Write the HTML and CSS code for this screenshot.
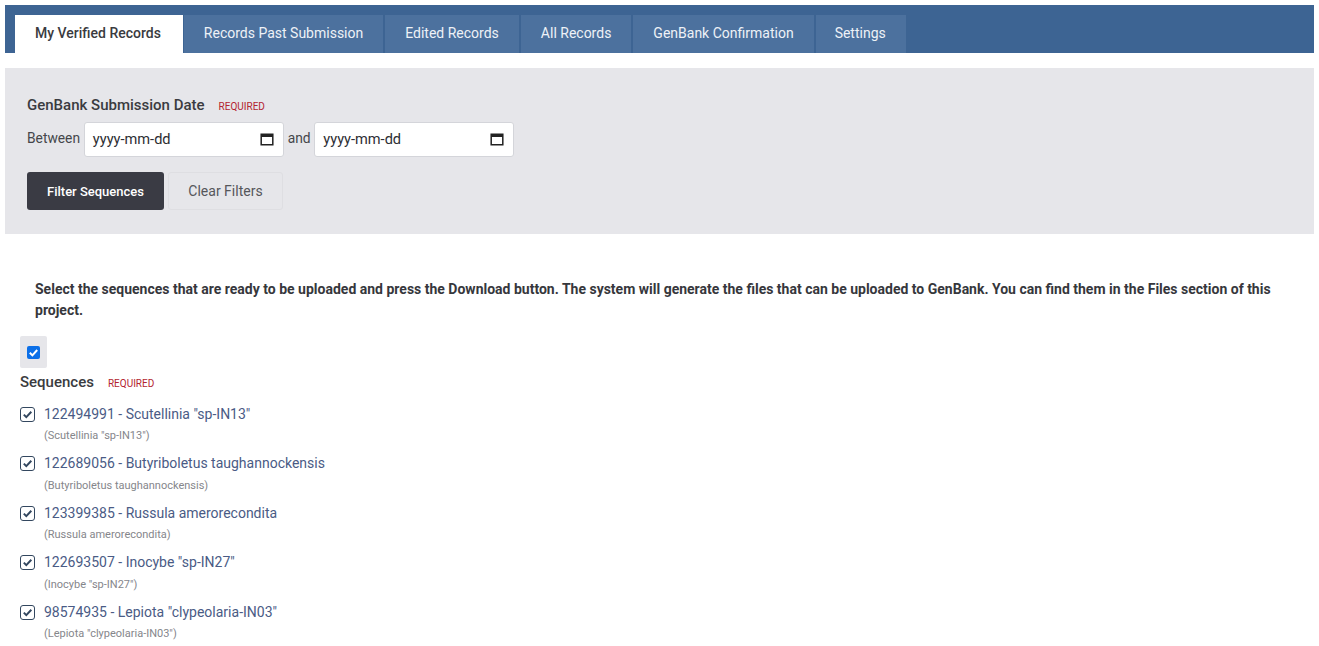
FILE: index.html
```html
<!DOCTYPE html>
<html lang="en">
<head>
<meta charset="utf-8">
<title>GenBank Submission</title>
<link rel="stylesheet" href="styles.css">
</head>
<body>
<nav class="tabs">
  <a class="tab active">My Verified Records</a>
  <a class="tab">Records Past Submission</a>
  <a class="tab">Edited Records</a>
  <a class="tab">All Records</a>
  <a class="tab">GenBank Confirmation</a>
  <a class="tab">Settings</a>
</nav>
<section class="filter">
  <div class="label-row"><span class="label">GenBank Submission Date</span><span class="req">REQUIRED</span></div>
  <div class="date-row">
    <span class="date-text">Between</span>
    <div class="date"><span>yyyy-mm-dd</span><svg width="14" height="14" viewBox="0 0 14 14"><path d="M1.2 2.2h11.6v10.6H1.200z" fill="none" stroke="#222" stroke-width="1.500"/><path d="M1 2h12v3H1z" fill="#222"/></svg></div>
    <span class="date-text">and</span>
    <div class="date"><span>yyyy-mm-dd</span><svg width="14" height="14" viewBox="0 0 14 14"><path d="M1.2 2.2h11.6v10.6H1.200z" fill="none" stroke="#222" stroke-width="1.500"/><path d="M1 2h12v3H1z" fill="#222"/></svg></div>
  </div>
  <div class="btn-row">
    <button class="btn primary">Filter Sequences</button>
    <button class="btn ghost">Clear Filters</button>
  </div>
</section>
<main class="content">
  <p class="intro">Select the sequences that are ready to be uploaded and press the Download button. The system will generate the files that can be uploaded to GenBank. You can find them in the Files section of this project.</p>
  <div class="all-box"><span class="all-check"><svg width="13" height="13" viewBox="0 0 13 13"><path d="M2.800 6.800l2.600 2.600 4.800-5.400" fill="none" stroke="#fff" stroke-width="2"/></svg></span></div>
  <div class="label-row seq-label"><span class="label">Sequences</span><span class="req">REQUIRED</span></div>
  <ul class="list">
    <li class="item"><span class="check"><svg width="11" height="11" viewBox="0 0 11 11"><path d="M1.800 5.600l2.500 2.500L9.300 2.800" fill="none" stroke="#33475f" stroke-width="2"/></svg></span><div><a class="name">122494991 - Scutellinia "sp-IN13"</a><small class="sub">(Scutellinia "sp-IN13")</small></div></li>
    <li class="item"><span class="check"><svg width="11" height="11" viewBox="0 0 11 11"><path d="M1.800 5.600l2.500 2.500L9.300 2.800" fill="none" stroke="#33475f" stroke-width="2"/></svg></span><div><a class="name">122689056 - Butyriboletus taughannockensis</a><small class="sub">(Butyriboletus taughannockensis)</small></div></li>
    <li class="item"><span class="check"><svg width="11" height="11" viewBox="0 0 11 11"><path d="M1.800 5.600l2.500 2.500L9.300 2.800" fill="none" stroke="#33475f" stroke-width="2"/></svg></span><div><a class="name">123399385 - Russula amerorecondita</a><small class="sub">(Russula amerorecondita)</small></div></li>
    <li class="item"><span class="check"><svg width="11" height="11" viewBox="0 0 11 11"><path d="M1.800 5.600l2.500 2.500L9.300 2.800" fill="none" stroke="#33475f" stroke-width="2"/></svg></span><div><a class="name">122693507 - Inocybe "sp-IN27"</a><small class="sub">(Inocybe "sp-IN27")</small></div></li>
    <li class="item"><span class="check"><svg width="11" height="11" viewBox="0 0 11 11"><path d="M1.800 5.600l2.500 2.500L9.300 2.800" fill="none" stroke="#33475f" stroke-width="2"/></svg></span><div><a class="name">98574935 - Lepiota "clypeolaria-IN03"</a><small class="sub">(Lepiota "clypeolaria-IN03")</small></div></li>
  </ul>
</main>
</body>
</html>
```
FILE: styles.css
```css
* { box-sizing: border-box; }
html, body { height: 646px; overflow: hidden; }
body {
  margin: 0;
  padding: 5px 5px 0;
  background: #fff;
  color: #3a3b40;
  font-family: Roboto, "Liberation Sans", sans-serif;
  font-size: 14px;
}
.tabs {
  display: flex;
  height: 48px;
  padding: 10px 0 0 10px;
  gap: 2px;
  background: #3d6493;
}
.tab {
  display: flex;
  align-items: center;
  padding: 0 20px 2px;
  height: 38px;
  background: #4c719e;
  color: #eef2f7;
  font-size: 14px;
  white-space: nowrap;
}
.tab.active {
  padding-right: 22px;
  margin-right: -1px;
  background: #fff;
  color: #3a3b40;
  font-weight: 500;
}
.tab:last-child { padding-left: 19px; }
.filter {
  margin-top: 15px;
  height: 166px;
  padding: 27px 22px 0;
  background: #e6e6ea;
}
.label-row { display: flex; align-items: center; height: 20px; }
.label { font-size: 15px; font-weight: 500; }
.req { margin-left: 14px; padding-top: 2px; font-size: 10px; color: #b3242f; }
.date-row {
  display: flex;
  align-items: center;
  gap: 3.800px;
  margin-top: 7px;
  color: #45464b;
}
.date-text { padding-bottom: 3px; font-size: 13.800px; }
.date {
  display: flex;
  align-items: center;
  justify-content: space-between;
  width: 200px;
  height: 35px;
  padding: 0 9px 2px 8px;
  background: #fff;
  border: 1px solid #d4d5da;
  border-radius: 3px;
  color: #2d2e33;
  font-size: 14.600px;
}
.btn-row { display: flex; gap: 4px; margin-top: 15px; }
.btn {
  height: 38px;
  border-radius: 3px;
  font-family: inherit;
  font-size: 13px;
}
.primary {
  width: 137px;
  border: 0;
  background: #3a3b44;
  color: #fff;
  font-weight: 500;
}
.ghost {
  width: 115px;
  border: 1px solid #dedee2;
  background: #e6e6ea;
  color: #55565b;
  font-size: 14px;
}
.content { padding: 0 15px; }
.intro {
  margin: 45px 0 0;
  padding: 0 15px;
  font-size: 14px;
  font-weight: 700;
  line-height: 21px;
  color: #36373c;
}
.all-box {
  display: flex;
  align-items: center;
  justify-content: center;
  width: 27px;
  height: 32px;
  margin-top: 15px;
  background: #e6e6ea;
  border-radius: 2px;
}
.all-check {
  display: flex;
  align-items: center;
  justify-content: center;
  width: 13px;
  height: 13px;
  border-radius: 2px;
  background: #0b6fe8;
}
.seq-label { margin-top: 4px; }
.list { list-style: none; margin: 14.500px 0 0; padding: 0; }
.item {
  display: flex;
  gap: 9px;
  height: 49.500px;
}
.check {
  display: flex;
  align-items: center;
  justify-content: center;
  flex: none;
  width: 15px;
  height: 15px;
  border: 1.500px solid #33475f;
  border-radius: 3px;
}
.name {
  display: block;
  color: #4a5b85;
  font-size: 14px;
  line-height: 15px;
}
.sub {
  display: block;
  margin-top: 7.500px;
  color: #85868b;
  font-size: 11px;
  line-height: 14px;
}
```
